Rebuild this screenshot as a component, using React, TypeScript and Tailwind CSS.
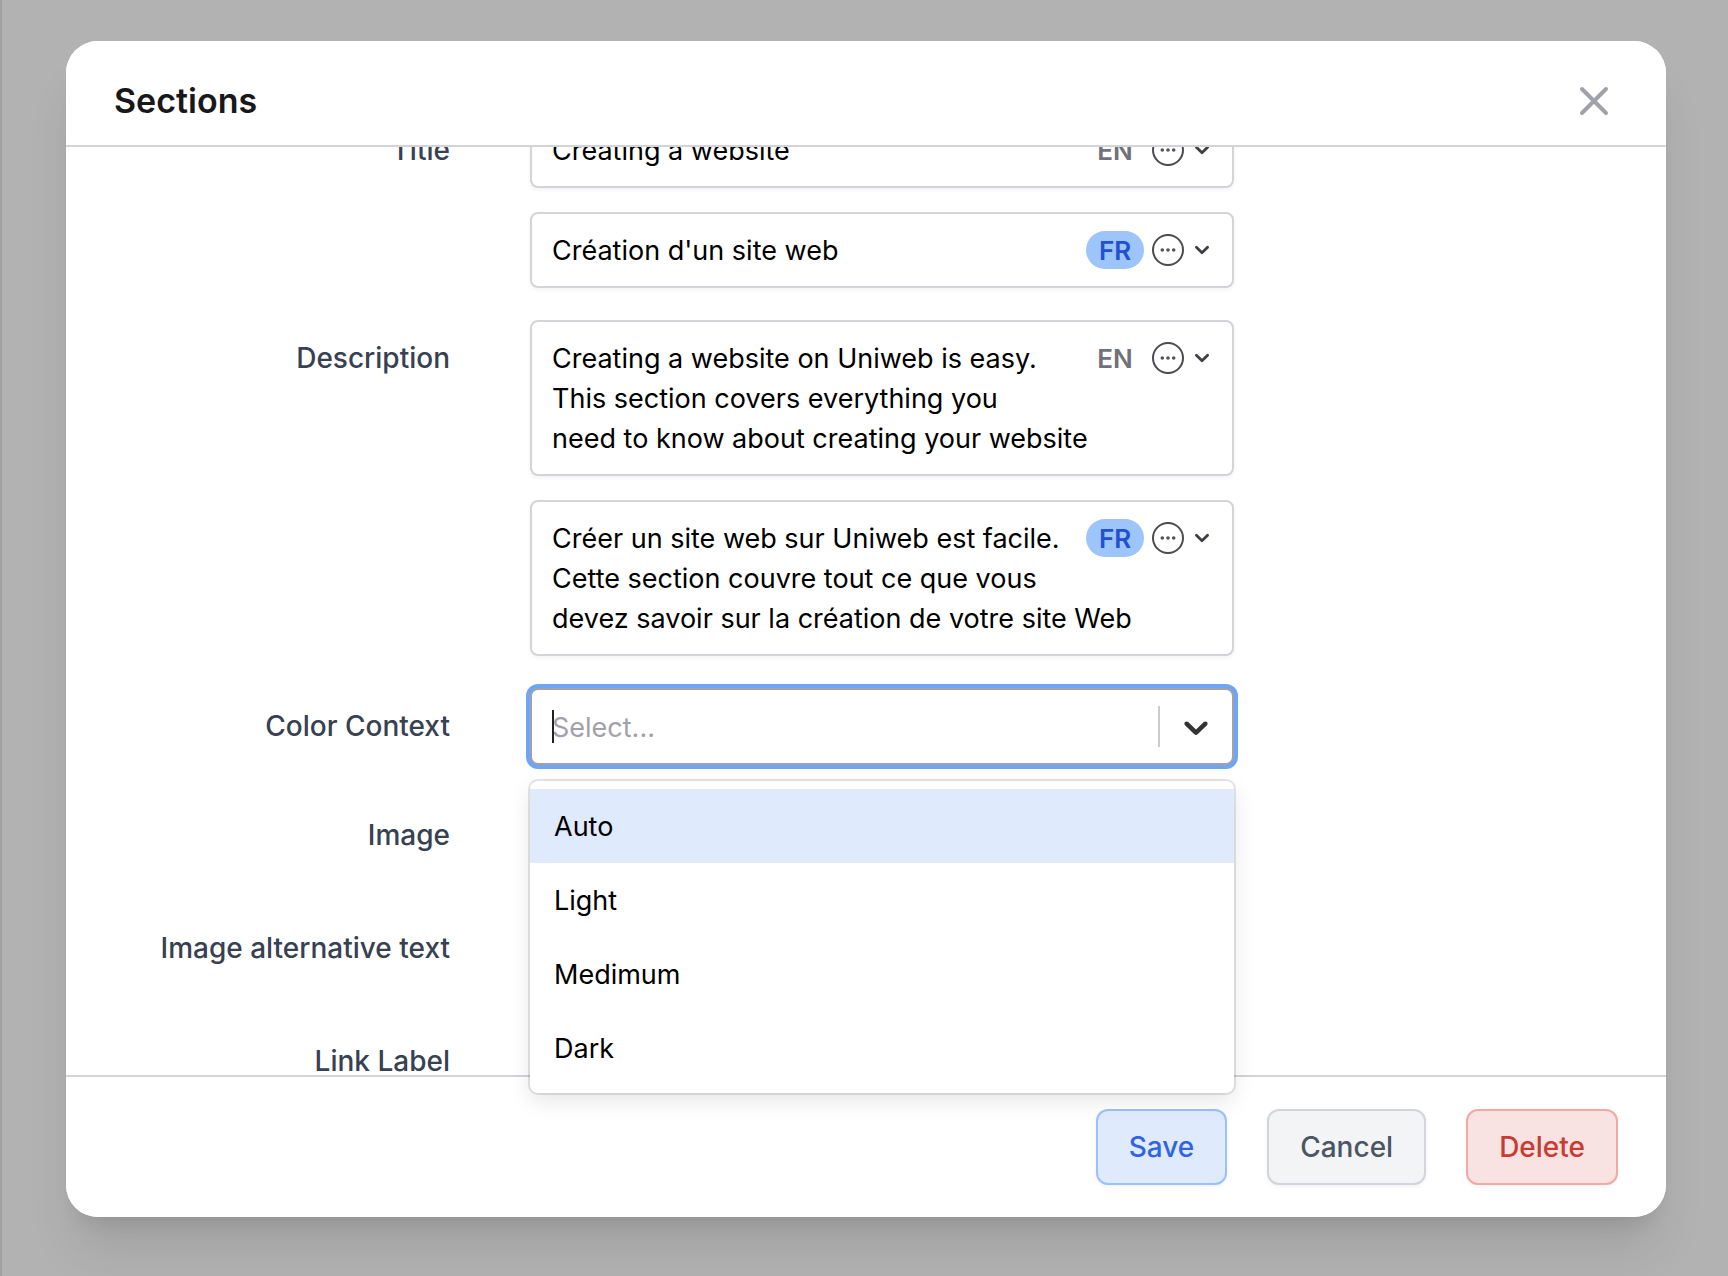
import type { ReactNode } from 'react';

type Lang = 'EN' | 'FR';

const inputClasses =
  'block w-full resize-none overflow-hidden rounded-lg border-2 border-[#d4d4d8] bg-white px-5 pt-[17px] pb-[15px] text-[27px] leading-10 text-black shadow-[0_2px_4px_rgba(0,0,0,0.05)] outline-none';

function LanguageTools({ lang }: { lang: Lang }) {
  return (
    <div className="absolute top-[19px] right-[18px] flex h-[38px] items-center">
      <button
        type="button"
        className={
          lang === 'FR'
            ? 'mr-2 flex h-[38px] w-[58px] items-center justify-center rounded-full bg-[#9dc5fa] text-[26px] font-semibold text-[#2450d0]'
            : 'mr-2 flex h-[38px] w-[58px] items-center justify-center rounded-full text-[26px] font-semibold text-[#71717a]'
        }
      >
        {lang}
      </button>
      <button type="button" aria-label={`${lang} options`} className="mr-1 size-8">
        <svg viewBox="0 0 32 32" className="size-8">
          <circle cx="16" cy="16" r="15" fill="none" stroke="#4b4b52" strokeWidth="2" />
          <circle cx="10.3" cy="16" r="1.8" fill="#52525b" />
          <circle cx="16" cy="16" r="1.8" fill="#52525b" />
          <circle cx="21.7" cy="16" r="1.8" fill="#52525b" />
        </svg>
      </button>
      <button type="button" aria-label={`Choose language, ${lang}`} className="size-7">
        <svg viewBox="0 0 20 20" fill="#3f3f46" className="size-7">
          <path
            fillRule="evenodd"
            clipRule="evenodd"
            d="M5.293 7.293a1 1 0 011.414 0L10 10.586l3.293-3.293a1 1 0 111.414 1.414l-4 4a1 1 0 01-1.414 0l-4-4a1 1 0 010-1.414z"
          />
        </svg>
      </button>
    </div>
  );
}

function Row({ label, id, children }: { label: string; id: string; children: ReactNode }) {
  return (
    <div className="grid grid-cols-[336fr_704fr_304fr] gap-x-20">
      <label htmlFor={id} className="pt-[18px] text-right text-[28px] leading-10 font-medium whitespace-nowrap text-[#374151]">
        {label}
      </label>
      <div className="flex min-w-0 flex-col gap-6">{children}</div>
    </div>
  );
}

function TextField({ id, lang, value }: { id: string; lang: Lang; value: string }) {
  return (
    <div className="relative">
      <input id={id} type="text" lang={lang.toLowerCase()} aria-label={`Title ${lang}`} defaultValue={value} className={inputClasses} />
      <LanguageTools lang={lang} />
    </div>
  );
}

function AreaField({ id, lang, value }: { id: string; lang: Lang; value: string }) {
  return (
    <div className="relative">
      <textarea
        id={id}
        rows={3}
        lang={lang.toLowerCase()}
        aria-label={`Description ${lang}`}
        spellCheck={false}
        defaultValue={value}
        className={inputClasses}
      />
      <LanguageTools lang={lang} />
    </div>
  );
}

const options = ['Auto', 'Light', 'Medimum', 'Dark'];

function ColorSelect() {
  return (
    <div className="relative">
      <div className="flex h-[77px] items-stretch rounded-lg border-2 border-[#a1a1aa] bg-white ring-4 ring-[#6ea5f5]">
        <div className="relative flex flex-1 items-center pl-5">
          <span className="absolute left-5 h-[33px] w-0.5 bg-[#222]" />
          <input
            id="color-context"
            type="text"
            role="combobox"
            aria-expanded="true"
            aria-controls="color-context-menu"
            placeholder="Select..."
            className="w-full bg-transparent pt-0.5 text-[27px] leading-10 text-black outline-none placeholder:text-[#a1a1aa]"
          />
        </div>
        <span className="my-4 w-0.5 bg-[#cccccc]" />
        <button type="button" aria-label="Toggle menu" className="flex items-center px-4">
          <svg viewBox="0 0 20 20" fill="#333333" className="size-10">
            <path d="M4.516 7.548c0.436-0.446 1.043-0.481 1.576 0l3.908 3.747 3.908-3.747c0.533-0.481 1.141-0.446 1.574 0 0.436 0.445 0.408 1.197 0 1.615-0.406 0.418-4.695 4.502-4.695 4.502-0.217 0.223-0.502 0.335-0.787 0.335s-0.57-0.112-0.789-0.335c0 0-4.287-4.084-4.695-4.502s-0.436-1.17 0-1.615z" />
          </svg>
        </button>
      </div>
      <ul
        id="color-context-menu"
        role="listbox"
        className="absolute inset-x-0 top-full z-20 mt-4 rounded-lg bg-white py-2 shadow-[0_0_0_2px_rgba(0,0,0,0.1),0_8px_22px_rgba(0,0,0,0.1)]"
      >
        {options.map((option, i) => (
          <li
            key={option}
            role="option"
            aria-selected={i === 0}
            className="px-6 pt-[18px] pb-4 text-[27px] leading-10 text-black aria-selected:bg-[#dfeafd]"
          >
            {option}
          </li>
        ))}
      </ul>
    </div>
  );
}

const buttonClasses = 'h-19 rounded-xl border-2 px-[31px] text-[28px] font-medium shadow-[0_2px_4px_rgba(0,0,0,0.05)]';

export default function App() {
  return (
    <main className="flex h-screen border-l-2 border-[#a0a0a0] bg-[#b2b2b2] pt-[41px] pr-[62px] pb-[59px] pl-16 font-['Inter',sans-serif]">
      <div
        role="dialog"
        aria-labelledby="dialog-title"
        className="flex min-w-0 flex-1 flex-col rounded-[32px] bg-white shadow-[0_40px_50px_-10px_rgba(0,0,0,0.1),0_16px_20px_-12px_rgba(0,0,0,0.1)]"
      >
        <header className="relative z-10 flex items-center justify-between rounded-t-[32px] border-b-2 border-[#d4d4d8] bg-white px-12 pt-9 pb-5">
          <h1 id="dialog-title" className="text-[34px] leading-[48px] font-semibold text-[#18181b]">
            Sections
          </h1>
          <button type="button" aria-label="Close" className="size-12">
            <svg viewBox="0 0 24 24" fill="none" stroke="#a1a1aa" strokeWidth="2" strokeLinecap="round" className="size-12">
              <path d="M6 18L18 6M6 6l12 12" />
            </svg>
          </button>
        </header>

        <form className="min-h-0 flex-1 px-12">
          <div className="-mt-[35px] flex flex-col gap-8">
            <Row label="Title" id="title-en">
              <TextField id="title-en" lang="EN" value="Creating a website" />
              <TextField id="title-fr" lang="FR" value="Création d'un site web" />
            </Row>
            <Row label="Description" id="description-en">
              <AreaField
                id="description-en"
                lang="EN"
                value={'Creating a website on Uniweb is easy.\nThis section covers everything you\nneed to know about creating your website'}
              />
              <AreaField
                id="description-fr"
                lang="FR"
                value={'Créer un site web sur Uniweb est facile.\nCette section couvre tout ce que vous\ndevez savoir sur la création de votre site Web'}
              />
            </Row>
            <Row label="Color Context" id="color-context">
              <ColorSelect />
            </Row>
            <Row label="Image" id="image">
              <button id="image" type="button" className="h-[81px]" />
            </Row>
            <Row label="Image alternative text" id="image-alt">
              <input id="image-alt" type="text" className="h-[81px]" />
            </Row>
            <Row label="Link Label" id="link-label">
              <input id="link-label" type="text" className="h-10" />
            </Row>
          </div>
        </form>

        <footer className="relative z-10 flex justify-end gap-10 rounded-b-[32px] border-t-2 border-[#d4d4d8] bg-white px-12 py-8">
          <button type="button" className={`${buttonClasses} border-[#98c3f8] bg-[#dfeafc] text-[#2f64e6]`}>
            Save
          </button>
          <button type="button" className={`${buttonClasses} border-[#d1d5db] bg-[#f3f4f6] text-[#4b5563]`}>
            Cancel
          </button>
          <button type="button" className={`${buttonClasses} border-[#f1a9a6] bg-[#f8e3e2] text-[#cb3a31]`}>
            Delete
          </button>
        </footer>
      </div>
    </main>
  );
}
